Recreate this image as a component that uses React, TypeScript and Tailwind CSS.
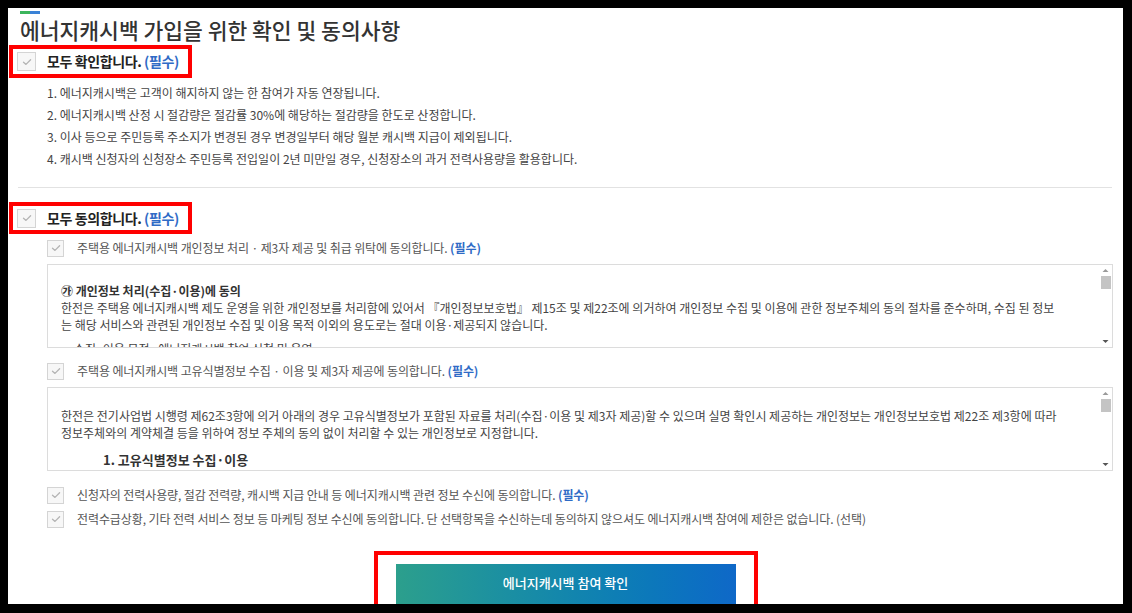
import React from "react";

const FONT = { fontFamily: '"Noto Sans CJK KR", "Noto Sans", sans-serif' };

function Check({ size = 17 }: { size?: number }) {
  return (
    <div
      className="flex shrink-0 items-center justify-center border border-[#d4d4d4] bg-[#f7f7f7]"
      style={{ width: size, height: size }}
    >
      <svg width="10" height="8" viewBox="0 0 10 8" fill="none">
        <path d="M1.5 4.2 L4 6.4 L8.6 1.8" stroke="#b4b4b4" strokeWidth="1.3" strokeLinecap="round" strokeLinejoin="round" />
      </svg>
    </div>
  );
}

function Req() {
  return <span className="font-bold text-[#2f6bc6]">(필수)</span>;
}

function Scrollbar() {
  return (
    <div className="flex w-[13px] shrink-0 flex-col items-center pt-[3px] pb-[3px]">
      <svg width="7" height="5" viewBox="0 0 7 5"><path d="M0.5 4 L3.5 1 L6.5 4 Z" fill="#9a9a9a" /></svg>
      <div className="mt-[3px] h-[13px] w-[10px] bg-[#c4c4c4]" />
      <div className="flex-1" />
      <svg width="7" height="5" viewBox="0 0 7 5"><path d="M0.5 1 L3.5 4 L6.5 1 Z" fill="#555" /></svg>
    </div>
  );
}

export default function App() {
  return (
    <div className="h-[613px] w-[1132px] overflow-hidden bg-black pl-[8px] pt-[8px]" style={FONT}>
      <div className="h-[596px] w-[1115px] overflow-hidden bg-white">
        {/* color bar */}
        <div className="ml-[12px] flex h-[6px] w-[20px] items-end">
          <div className="h-[3px] w-[10px] bg-[#3cb55c]" />
          <div className="h-[3px] w-[10px] bg-[#3a82d6]" />
        </div>
        <h1 className="ml-[12px] mt-[3px] text-[21.5px] font-medium leading-[26px] text-[#333]">
          에너지캐시백 가입을 위한 확인 및 동의사항
        </h1>

        {/* 모두 확인 */}
        <div className="ml-[1px] mt-[2px] flex h-[33px] w-[183px] items-center gap-[11px] border-4 border-[#ff0000] pl-[4px]">
          <Check size={19} />
          <span className="whitespace-nowrap text-[14px] font-bold tracking-[-0.4px] text-[#222]">
            모두 확인합니다. <Req />
          </span>
        </div>

        <ul className="ml-[39px] mt-[4px] text-[12px] leading-[22px] text-[#444]">
          <li>1. 에너지캐시백은 고객이 해지하지 않는 한 참여가 자동 연장됩니다.</li>
          <li>2. 에너지캐시백 산정 시 절감량은 절감률 30%에 해당하는 절감량을 한도로 산정합니다.</li>
          <li>3. 이사 등으로 주민등록 주소지가 변경된 경우 변경일부터 해당 월분 캐시백 지급이 제외됩니다.</li>
          <li>4. 캐시백 신청자의 신청장소 주민등록 전입일이 2년 미만일 경우, 신청장소의 과거 전력사용량을 활용합니다.</li>
        </ul>

        <div className="ml-[10px] mt-[17px] h-px w-[1094px] bg-[#e2e2e2]" />

        {/* 모두 동의 */}
        <div className="ml-[1px] mt-[14px] flex h-[32px] w-[183px] items-center gap-[11px] border-4 border-[#ff0000] pl-[4px]">
          <Check size={19} />
          <span className="whitespace-nowrap text-[14px] font-bold tracking-[-0.4px] text-[#222]">
            모두 동의합니다. <Req />
          </span>
        </div>

        {/* item 1 */}
        <div className="ml-[39px] mt-[5px] flex h-[18px] items-center gap-[13px]">
          <Check />
          <span className="whitespace-nowrap text-[12px] tracking-[-0.1px] text-[#555]">
            주택용 에너지캐시백 개인정보 처리 · 제3자 제공 및 취급 위탁에 동의합니다. <Req />
          </span>
        </div>
        <div className="ml-[39px] mt-[7px] flex h-[84px] w-[1066px] overflow-hidden border border-[#dcdcdc]">
          <div className="flex-1 overflow-hidden pl-[13px] pt-[17px] text-[12px] leading-[17px] text-[#444]">
            <div className="whitespace-nowrap font-bold text-[#333]">㉮ 개인정보 처리(수집·이용)에 동의</div>
            <div className="whitespace-nowrap">
              한전은 주택용 에너지캐시백 제도 운영을 위한 개인정보를 처리함에 있어서 『개인정보보호법』 제15조 및 제22조에 의거하여 개인정보 수집 및 이용에 관한 정보주체의 동의 절차를 준수하며, 수집 된 정보
            </div>
            <div className="whitespace-nowrap">는 해당 서비스와 관련된 개인정보 수집 및 이용 목적 이외의 용도로는 절대 이용·제공되지 않습니다.</div>
            <div className="mt-[7px] whitespace-nowrap pl-[6px]">- 수집·이용 목적 : 에너지캐시백 참여 신청 및 운영</div>
          </div>
          <Scrollbar />
        </div>

        {/* item 2 */}
        <div className="ml-[39px] mt-[14px] flex h-[18px] items-center gap-[13px]">
          <Check />
          <span className="whitespace-nowrap text-[12px] tracking-[-0.1px] text-[#555]">
            주택용 에너지캐시백 고유식별정보 수집 · 이용 및 제3자 제공에 동의합니다. <Req />
          </span>
        </div>
        <div className="ml-[39px] mt-[7px] flex h-[84px] w-[1066px] overflow-hidden border border-[#dcdcdc]">
          <div className="flex-1 overflow-hidden pl-[13px] pt-[19px] text-[12px] leading-[17px] text-[#444]">
            <div className="whitespace-nowrap">
              한전은 전기사업법 시행령 제62조3항에 의거 아래의 경우 고유식별정보가 포함된 자료를 처리(수집·이용 및 제3자 제공)할 수 있으며 실명 확인시 제공하는 개인정보는 개인정보보호법 제22조 제3항에 따라
            </div>
            <div className="whitespace-nowrap">정보주체와의 계약체결 등을 위하여 정보 주체의 동의 없이 처리할 수 있는 개인정보로 지정합니다.</div>
            <div className="ml-[42px] mt-[10px] whitespace-nowrap text-[13px] font-bold leading-[18px] text-[#333]">
              1. 고유식별정보 수집·이용
            </div>
          </div>
          <Scrollbar />
        </div>

        {/* item 3 */}
        <div className="ml-[39px] mt-[15px] flex h-[18px] items-center gap-[13px]">
          <Check />
          <span className="whitespace-nowrap text-[12px] tracking-[-0.1px] text-[#555]">
            신청자의 전력사용량, 절감 전력량, 캐시백 지급 안내 등 에너지캐시백 관련 정보 수신에 동의합니다. <Req />
          </span>
        </div>
        {/* item 4 */}
        <div className="ml-[39px] mt-[6px] flex h-[18px] items-center gap-[13px]">
          <Check />
          <span className="whitespace-nowrap text-[12px] tracking-[-0.1px] text-[#555]">
            전력수급상황, 기타 전력 서비스 정보 등 마케팅 정보 수신에 동의합니다. 단 선택항목을 수신하는데 동의하지 않으셔도 에너지캐시백 참여에 제한은 없습니다. (선택)
          </span>
        </div>

        {/* button */}
        <div className="mx-auto mt-[23px] w-[384px] border-4 border-[#ff0000] px-[18px] pt-[9px] pb-[9px]">
          <button className="flex h-[44px] w-full items-start justify-center bg-gradient-to-r from-[#2c9f8c] to-[#0f68c8] pt-[9px] text-[13px] font-medium text-white">
            에너지캐시백 참여 확인
          </button>
        </div>
      </div>
    </div>
  );
}
